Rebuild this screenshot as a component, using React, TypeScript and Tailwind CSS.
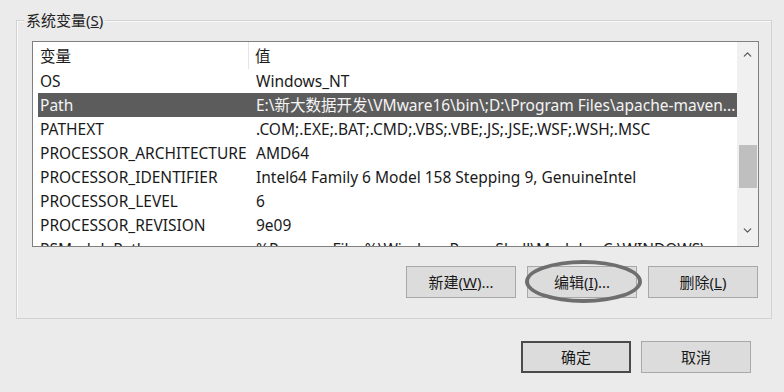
import { ChevronDown, ChevronUp } from "lucide-react"

const font = { fontFamily: '"Noto Sans", "Noto Sans CJK SC", sans-serif' }

const rows: [string, string][] = [
  ["OS", "Windows_NT"],
  ["Path", "E:\\新大数据开发\\VMware16\\bin\\;D:\\Program Files\\apache-maven..."],
  ["PATHEXT", ".COM;.EXE;.BAT;.CMD;.VBS;.VBE;.JS;.JSE;.WSF;.WSH;.MSC"],
  ["PROCESSOR_ARCHITECTURE", "AMD64"],
  ["PROCESSOR_IDENTIFIER", "Intel64 Family 6 Model 158 Stepping 9, GenuineIntel"],
  ["PROCESSOR_LEVEL", "6"],
  ["PROCESSOR_REVISION", "9e09"],
  ["PSModulePath", "%ProgramFiles%\\WindowsPowerShell\\Modules;C:\\WINDOWS\\..."],
]

function Btn({ children, primary }: { children: React.ReactNode; primary?: boolean }) {
  return (
    <div
      className={
        "w-[110px] h-[32px] flex items-center justify-center bg-[#dcdcdc] text-[15px] text-[#1a1a1a] " +
        (primary ? "border-2 border-[#4a4a4a]" : "border border-[#a8a8a8]")
      }
    >
      {children}
    </div>
  )
}

export default function App() {
  return (
    <div className="w-[784px] h-[392px] bg-[#ebebeb] pt-[20px] pl-[16px] overflow-hidden" style={font}>
      {/* 系统变量 group */}
      <div className="relative w-[756px] h-[299px] border border-[#d2d2d2] shadow-[inset_1px_1px_0_#f8f8f8] pt-[20px] pl-[15px] pr-[13px]">
        <div className="absolute -top-[11px] left-[7px] bg-[#ebebeb] px-[2px] text-[15px] leading-[20px] text-[#222]">
          系统变量(<span className="underline">S</span>)
        </div>

        <div className="w-[727px] h-[206px] border border-[#808080] bg-white flex overflow-hidden text-[15.5px] text-[#1a1a1a]">
          <div className="flex-1 flex flex-col pl-[5px] overflow-hidden">
            <div className="h-[27px] flex items-center shrink-0">
              <div className="w-[211px] pl-[2px] pt-[3px] h-full flex items-center border-r border-[#e4e4e4]">变量</div>
              <div className="pl-[6px] pt-[3px]">值</div>
            </div>
            {rows.map(([name, value]) => (
              <div
                key={name}
                className={
                  "h-[24px] shrink-0 flex items-center pt-[2px] whitespace-nowrap overflow-hidden " +
                  (name === "Path" ? "bg-[#5c5c5c] text-[#f4f4f4]" : "")
                }
              >
                <div className="w-[211px] pl-[2px] shrink-0">{name}</div>
                <div className="pl-[7px]">{value}</div>
              </div>
            ))}
          </div>

          {/* scrollbar */}
          <div className="w-[21px] shrink-0 bg-[#f0f0f0] flex flex-col items-center">
            <div className="h-[20px] flex items-center justify-center mt-[2px]">
              <ChevronUp className="w-[13px] h-[13px] text-[#555]" strokeWidth={2.2} />
            </div>
            <div className="h-[81px]" />
            <div className="w-[18px] h-[43px] bg-[#bfbfbf]" />
            <div className="flex-1" />
            <div className="h-[20px] flex items-center justify-center mb-[6px]">
              <ChevronDown className="w-[13px] h-[13px] text-[#555]" strokeWidth={2.2} />
            </div>
          </div>
        </div>

        <div className="flex justify-end gap-[11px] mt-[19px]">
          <Btn>
            新建(<span className="underline">W</span>)...
          </Btn>
          <div className="relative">
            <Btn>
              编辑(<span className="underline">I</span>)...
            </Btn>
            <div className="absolute -left-[2px] -top-[6px] w-[117px] h-[43px] rounded-[50%] border-[4px] border-[#6e6e6e]" />
          </div>
          <Btn>
            删除(<span className="underline">L</span>)
          </Btn>
        </div>
      </div>

      <div className="flex justify-end gap-[10px] mt-[22px] pr-[33px]">
        <Btn primary>确定</Btn>
        <Btn>取消</Btn>
      </div>
    </div>
  )
}
